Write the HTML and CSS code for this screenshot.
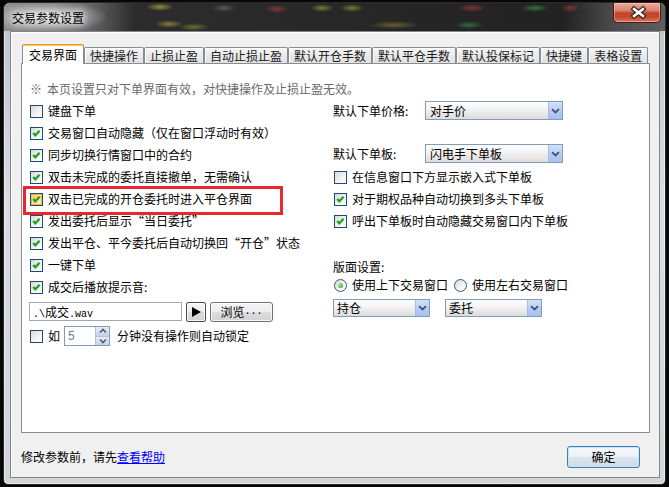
FILE: index.html
```html
<!DOCTYPE html>
<html lang="zh-CN">
<head>
<meta charset="utf-8">
<title>交易参数设置</title>
<link rel="stylesheet" href="styles.css">
</head>
<body>
<div class="window">
  <div class="titlebar">
    <span class="title">交易参数设置</span>
    <div class="close">
      <svg width="46" height="19" viewBox="0 0 46 19">
        <path d="M20 6 L29 13 M29 6 L20 13" stroke="#3b2b29" stroke-width="5" stroke-linecap="square" fill="none"/>
        <path d="M20 6 L29 13 M29 6 L20 13" stroke="#ffffff" stroke-width="2.4" stroke-linecap="square" fill="none"/>
      </svg>
    </div>
  </div>
  <div class="client">
    <div class="tabs">
      <div class="tab active">交易界面</div>
      <div class="tab">快捷操作</div>
      <div class="tab">止损止盈</div>
      <div class="tab">自动止损止盈</div>
      <div class="tab">默认开仓手数</div>
      <div class="tab">默认平仓手数</div>
      <div class="tab">默认投保标记</div>
      <div class="tab">快捷键</div>
      <div class="tab">表格设置</div>
    </div>
    <div class="panel">
      <div class="note"><span class="mark">※</span>本页设置只对下单界面有效，对快捷操作及止损止盈无效。</div>
      <div class="cols">
        <div class="col-left">
          <div class="row"><span class="cb"></span><span class="lbl">键盘下单</span></div>
          <div class="row"><span class="cb"><svg width="11" height="11" viewBox="0 0 11 11"><polyline points="2.2,5 4.3,7.3 8.6,2.8" fill="none" stroke="#21a121" stroke-width="2.3"/></svg></span><span class="lbl">交易窗口自动隐藏（仅在窗口浮动时有效）</span></div>
          <div class="row"><span class="cb"><svg width="11" height="11" viewBox="0 0 11 11"><polyline points="2.2,5 4.3,7.3 8.6,2.8" fill="none" stroke="#21a121" stroke-width="2.3"/></svg></span><span class="lbl">同步切换行情窗口中的合约</span></div>
          <div class="row"><span class="cb"><svg width="11" height="11" viewBox="0 0 11 11"><polyline points="2.2,5 4.3,7.3 8.6,2.8" fill="none" stroke="#21a121" stroke-width="2.3"/></svg></span><span class="lbl">双击未完成的委托直接撤单，无需确认</span></div>
          <div class="row marked"><span class="cb hot"><svg width="11" height="11" viewBox="0 0 11 11"><polyline points="2.2,5 4.3,7.3 8.6,2.8" fill="none" stroke="#21a121" stroke-width="2.3"/></svg></span><span class="lbl">双击已完成的开仓委托时进入平仓界面</span></div>
          <div class="row"><span class="cb"><svg width="11" height="11" viewBox="0 0 11 11"><polyline points="2.2,5 4.3,7.3 8.6,2.8" fill="none" stroke="#21a121" stroke-width="2.3"/></svg></span><span class="lbl">发出委托后显示“当日委托”</span></div>
          <div class="row"><span class="cb"><svg width="11" height="11" viewBox="0 0 11 11"><polyline points="2.2,5 4.3,7.3 8.6,2.8" fill="none" stroke="#21a121" stroke-width="2.3"/></svg></span><span class="lbl">发出平仓、平今委托后自动切换回“开仓”状态</span></div>
          <div class="row"><span class="cb"><svg width="11" height="11" viewBox="0 0 11 11"><polyline points="2.2,5 4.3,7.3 8.6,2.8" fill="none" stroke="#21a121" stroke-width="2.3"/></svg></span><span class="lbl">一键下单</span></div>
          <div class="row"><span class="cb"><svg width="11" height="11" viewBox="0 0 11 11"><polyline points="2.2,5 4.3,7.3 8.6,2.8" fill="none" stroke="#21a121" stroke-width="2.3"/></svg></span><span class="lbl">成交后播放提示音:</span></div>
          <div class="file-row">
            <div class="textbox"><span class="mono">.\</span>成交<span class="mono">.wav</span></div>
            <div class="btn play"><svg width="18" height="18" viewBox="0 0 18 18"><polygon points="5,4 14,9 5,14" fill="#000"/></svg></div>
            <div class="btn browse">浏览<span class="mono">...</span></div>
          </div>
          <div class="lock-row">
            <span class="cb"></span><span class="lbl">如</span>
            <div class="spin">
              <span class="spin-val">5</span>
              <span class="spin-btns">
                <span class="spin-b"><svg width="12" height="8" viewBox="0 0 12 8"><polyline points="3,5.5 6,2.5 9,5.5" fill="none" stroke="#4d5b70" stroke-width="1.6"/></svg></span>
                <span class="spin-b"><svg width="12" height="8" viewBox="0 0 12 8"><polyline points="3,2.5 6,5.5 9,2.5" fill="none" stroke="#4d5b70" stroke-width="1.6"/></svg></span>
              </span>
            </div>
            <span class="lbl after">分钟没有操作则自动锁定</span>
          </div>
        </div>
        <div class="col-right">
          <div class="field-row">
            <span class="flabel">默认下单价格:</span>
            <div class="select w138"><span class="sel-text">对手价</span><span class="sel-btn"><svg width="9" height="6" viewBox="0 0 9 6"><polyline points="1,1.2 4.5,4.5 8,1.2" fill="none" stroke="#3f5279" stroke-width="1.8"/></svg></span></div>
          </div>
          <div class="field-row second">
            <span class="flabel">默认下单板:</span>
            <div class="select w138"><span class="sel-text">闪电手下单板</span><span class="sel-btn"><svg width="9" height="6" viewBox="0 0 9 6"><polyline points="1,1.2 4.5,4.5 8,1.2" fill="none" stroke="#3f5279" stroke-width="1.8"/></svg></span></div>
          </div>
          <div class="rchecks">
            <div class="row"><span class="cb"></span><span class="lbl">在信息窗口下方显示嵌入式下单板</span></div>
            <div class="row"><span class="cb"><svg width="11" height="11" viewBox="0 0 11 11"><polyline points="2.2,5 4.3,7.3 8.6,2.8" fill="none" stroke="#21a121" stroke-width="2.3"/></svg></span><span class="lbl">对于期权品种自动切换到多头下单板</span></div>
            <div class="row"><span class="cb"><svg width="11" height="11" viewBox="0 0 11 11"><polyline points="2.2,5 4.3,7.3 8.6,2.8" fill="none" stroke="#21a121" stroke-width="2.3"/></svg></span><span class="lbl">呼出下单板时自动隐藏交易窗口内下单板</span></div>
          </div>
          <div class="layout-title">版面设置:</div>
          <div class="radio-row">
            <span class="radio on"></span><span class="lbl">使用上下交易窗口</span>
            <span class="radio second"></span><span class="lbl">使用左右交易窗口</span>
          </div>
          <div class="layout-selects">
            <div class="select w97"><span class="sel-text">持仓</span><span class="sel-btn"><svg width="9" height="6" viewBox="0 0 9 6"><polyline points="1,1.2 4.5,4.5 8,1.2" fill="none" stroke="#3f5279" stroke-width="1.8"/></svg></span></div>
            <div class="select w97 gap"><span class="sel-text">委托</span><span class="sel-btn"><svg width="9" height="6" viewBox="0 0 9 6"><polyline points="1,1.2 4.5,4.5 8,1.2" fill="none" stroke="#3f5279" stroke-width="1.8"/></svg></span></div>
          </div>
        </div>
      </div>
    </div>
    <div class="footer">
      <span class="hint">修改参数前，请先<a class="link">查看帮助</a></span>
      <div class="ok">确定</div>
    </div>
  </div>
</div>
</body>
</html>
```
FILE: styles.css
```css
* { box-sizing: border-box; margin: 0; padding: 0; }
html, body { width: 669px; height: 487px; overflow: hidden; }
body {
  background: #070707;
  font-family: "Noto Sans CJK SC", "Noto Sans", sans-serif;
  font-size: 12px;
  color: #000;
  padding: 2px 0 0 3px;
}
.mono { font-family: "Liberation Mono", monospace; font-size: 10px; }

.window {
  width: 663px;
  height: 483px;
  border: 1px solid #2a2a2a;
  border-radius: 7px 7px 5px 5px;
  background: linear-gradient(#bfc2c6, #d9dbde 40%, #d3d5d8);
  box-shadow: inset 0 0 0 1px rgba(255,255,255,0.5);
  display: flex;
  flex-direction: column;
}
.titlebar {
  height: 28px;
  flex: none;
  display: flex;
  align-items: flex-start;
  border-radius: 6px 6px 0 0;
  background:
    radial-gradient(ellipse 14px 4px at 156px 4px, rgba(200,190,70,0.65), rgba(200,190,70,0)),
    radial-gradient(ellipse 14px 4px at 165px 21px, rgba(190,180,60,0.6), rgba(190,180,60,0)),
    radial-gradient(ellipse 16px 4px at 190px 24px, rgba(170,160,60,0.55), rgba(170,160,60,0)),
    radial-gradient(ellipse 12px 4px at 220px 5px, rgba(150,150,150,0.45), rgba(150,150,150,0)),
    radial-gradient(ellipse 12px 4px at 273px 6px, rgba(180,60,60,0.65), rgba(180,60,60,0)),
    radial-gradient(ellipse 12px 4px at 318px 5px, rgba(180,170,60,0.6), rgba(180,170,60,0)),
    radial-gradient(ellipse 12px 4px at 348px 5px, rgba(180,170,60,0.6), rgba(180,170,60,0)),
    radial-gradient(ellipse 26px 4px at 390px 22px, rgba(160,150,60,0.5), rgba(160,150,60,0)),
    radial-gradient(ellipse 14px 4px at 468px 5px, rgba(180,60,60,0.65), rgba(180,60,60,0)),
    radial-gradient(ellipse 14px 4px at 465px 22px, rgba(60,160,70,0.6), rgba(60,160,70,0)),
    radial-gradient(ellipse 14px 4px at 531px 5px, rgba(60,170,80,0.6), rgba(60,170,80,0)),
    radial-gradient(ellipse 10px 4px at 566px 5px, rgba(180,60,60,0.6), rgba(180,60,60,0)),
    radial-gradient(ellipse 60px 16px at 44px 14px, rgba(225,225,225,0.95), rgba(225,225,225,0)),
    linear-gradient(to right, #8d8d8d 0, #6c6c6c 80px, #2c2c2c 130px, #222222 560px, #4c4c4c 610px, #5e5e5e 100%);
}
.title {
  margin: 7px 0 0 8px;
  line-height: 16px;
  color: #000;
  text-shadow: 0 0 6px #fff, 0 0 10px #fff;
}
.close {
  margin: -1px 4px 0 auto;
  width: 48px;
  height: 21px;
  border: 1px solid #44201b;
  border-radius: 0 0 5px 5px;
  background: linear-gradient(#e9ab9c 0%, #d9826f 40%, #c3432a 52%, #c44a2e 75%, #dc7c5c 100%);
  box-shadow: inset 0 0 0 1px rgba(255,210,200,0.45);
}
.close svg { display: block; }

.client {
  margin: 0 5px 0 6px;
  height: 447px;
  flex: none;
  background: #f0f0f0;
  border: 1px solid #80868c;
  box-shadow: inset 1px 1px 0 #ffffff;
  padding: 12px 9px 0 10px;
  display: flex;
  flex-direction: column;
}

.tabs {
  height: 19px;
  flex: none;
  display: flex;
  align-items: flex-end;
  padding-left: 1px;
}
.tab {
  height: 16px;
  padding: 0 5px;
  border: 1px solid #898c95;
  border-bottom: 0;
  border-radius: 2px 2px 0 0;
  background: linear-gradient(#f6f6f6, #e8e8e8 60%, #e2e2e2);
  box-shadow: inset 1px 1px 0 #ffffff;
  line-height: 15px;
  color: #1a1a1a;
  white-space: nowrap;
}
.tab.active {
  height: 20px;
  padding: 0 6px;
  background: #ffffff;
  margin-bottom: -1px;
  position: relative;
  z-index: 1;
  line-height: 20px;
  border-top-color: #e3952e;
  box-shadow: inset 0 1px 0 #ffc94a;
  color: #000;
}

.panel {
  height: 370px;
  flex: none;
  border: 1px solid #898c95;
  background: #ffffff;
  padding-left: 8px;
}
.note {
  margin-top: 17px;
  line-height: 16px;
  color: #6a6a6a;
}
.mark { display: inline-block; width: 17px; }

.cols {
  margin-top: 3px;
  display: grid;
  grid-template-columns: 303px 1fr;
}
.row {
  height: 22px;
  display: flex;
  align-items: center;
  white-space: nowrap;
}
.lbl { margin-left: 5px; line-height: 16px; }

.cb {
  width: 13px;
  height: 13px;
  flex: none;
  border: 1px solid #1d4a78;
  background: linear-gradient(135deg, #d9d9d4, #f4f4f2 60%, #ffffff);
  display: flex;
  align-items: center;
  justify-content: center;
}
.cb svg { display: block; }
.cb.hot {
  background: linear-gradient(135deg, #f7c65a, #fde7a8 70%, #fff4d6);
  box-shadow: inset 0 0 0 1px #f5b53a;
}

.marked { position: relative; }
.marked::after {
  content: "";
  position: absolute;
  left: -7px;
  top: -2px;
  width: 254px;
  height: 23px;
  border: 3px solid #e8282e;
  pointer-events: none;
}

.file-row {
  margin-top: 4px;
  display: flex;
  align-items: flex-start;
  height: 20px;
}
.textbox {
  margin-left: -1px;
  width: 153px;
  height: 19px;
  border: 1px solid #a3a9b1;
  background: #fff;
  padding-left: 3px;
  line-height: 17px;
  white-space: nowrap;
}
.btn {
  height: 20px;
  border: 1px solid #707070;
  border-radius: 3px;
  background: linear-gradient(#f4f4f4, #ececec 50%, #dedede 50%, #d2d2d2);
  box-shadow: inset 0 0 0 1px rgba(255,255,255,0.8);
  display: flex;
  align-items: center;
  justify-content: center;
}
.btn.play { margin-left: 4px; width: 20px; border-color: #4a4a4a; border-radius: 2px; }
.btn.play svg { display: block; }
.btn.browse { margin-left: 4px; width: 63px; line-height: 16px; }

.lock-row {
  margin-top: 4px;
  height: 20px;
  display: flex;
  align-items: center;
  white-space: nowrap;
}
.spin {
  margin-left: 4px;
  width: 46px;
  height: 20px;
  border: 1px solid #7f9db9;
  background: #fff;
  display: flex;
}
.spin-val {
  flex: 1;
  padding-left: 3px;
  color: #7a7a7a;
  font-family: "Liberation Sans", sans-serif;
  font-size: 12px;
  line-height: 18px;
}
.spin-btns {
  width: 14px;
  display: flex;
  flex-direction: column;
  border-left: 1px solid #b4c4dc;
}
.spin-b {
  flex: 1;
  background: linear-gradient(#e6edf7, #c3d2e8);
  display: flex;
  align-items: center;
  justify-content: center;
}
.spin-b + .spin-b { border-top: 1px solid #b4c4dc; }
.spin-b svg { display: block; }
.lbl.after { margin-left: 7px; }

.field-row {
  height: 21px;
  display: flex;
  align-items: center;
  white-space: nowrap;
}
.field-row.second { margin-top: 22px; }
.flabel { width: 92px; flex: none; line-height: 16px; }

.select {
  height: 19px;
  display: flex;
  border: 1px solid #7f9db9;
  background: linear-gradient(#ffffff, #f2f2f2 45%, #dcdcdc);
  white-space: nowrap;
}
.select.w138 { width: 138px; }
.select.w97 { width: 97px; height: 18px; }
.select.gap { margin-left: 15px; }
.sel-text { flex: 1; padding-left: 4px; line-height: 17px; }
.w97 .sel-text { padding-left: 3px; line-height: 16px; }
.sel-btn {
  width: 14px;
  flex: none;
  border-left: 1px solid #a7bce4;
  background: linear-gradient(#d3e0fa, #b4c9f2 60%, #a8bfee);
  display: flex;
  align-items: center;
  justify-content: center;
}
.sel-btn svg { display: block; }

.rchecks { margin-top: 2px; padding-left: 1px; }
.layout-title { margin-top: 26px; height: 18px; line-height: 18px; }
.radio-row {
  height: 18px;
  display: flex;
  align-items: center;
  padding-left: 1px;
  white-space: nowrap;
}
.radio {
  width: 13px;
  height: 13px;
  flex: none;
  border-radius: 50%;
  border: 1px solid #2a5b8c;
  background: linear-gradient(135deg, #d6d6d2, #f6f6f4 60%, #ffffff);
  display: flex;
  align-items: center;
  justify-content: center;
}
.radio.second { margin-left: 6px; }
.radio.on::after {
  content: "";
  width: 5px;
  height: 5px;
  border-radius: 50%;
  background: radial-gradient(circle at 35% 35%, #9ef09e, #1f9e1f);
}
.layout-selects { margin-top: 5px; display: flex; }

.footer {
  margin-top: 13px;
  height: 22px;
  flex: none;
  display: flex;
  align-items: center;
  justify-content: space-between;
  padding-right: 10px;
}
.hint { line-height: 16px; }
.link { color: #0000ff; text-decoration: underline; }
.ok {
  width: 73px;
  height: 22px;
  border: 1px solid #3c7fb1;
  border-radius: 3px;
  background: linear-gradient(#f4f8fb, #ebf1f6 50%, #dde6ee 50%, #cfdbe6);
  box-shadow: inset 0 0 0 1px #c8e4f6;
  display: flex;
  align-items: center;
  justify-content: center;
  line-height: 16px;
}
```
